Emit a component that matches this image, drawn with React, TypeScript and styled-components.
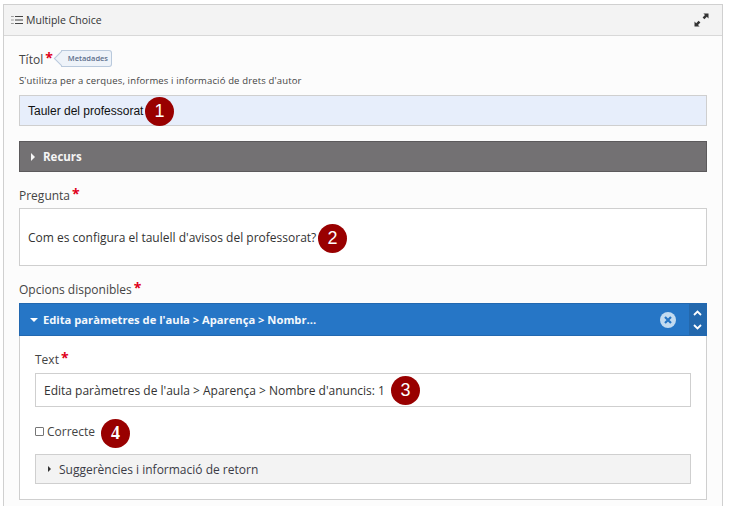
import React from "react";
import styled, { createGlobalStyle } from "styled-components";

const GlobalStyle = createGlobalStyle`
  html, body {
    margin: 0;
    height: 506px;
    overflow: hidden;
    background: #fff;
    font-family: "Open Sans", sans-serif;
  }
`;

const Editor = styled.div`
  box-sizing: border-box;
  width: 720px;
  height: 502px;
  margin: 4px 0 0 3px;
  background: #fcfcfc;
  border: 1px solid #d0d0d0;
  border-bottom: 0;
`;

const Header = styled.div`
  box-sizing: border-box;
  height: 31px;
  display: flex;
  align-items: center;
  justify-content: space-between;
  padding: 0 13px 0 7px;
  background: #f3f3f3;
  border-bottom: 1px solid #d8d8d8;
  font-size: 10.5px;
  font-weight: 400;
  color: #333;
`;

const HeaderTitle = styled.div`
  display: flex;
  align-items: center;
  gap: 3px;
`;

const Body = styled.div`
  padding: 14px 15px 0;
`;

const Label = styled.div`
  display: flex;
  align-items: flex-start;
  height: 19px;
  font-size: 12px;
  line-height: 19px;
  color: #444;
`;

const Star = styled.span`
  color: #e0001a;
  font-size: 14px;
  font-weight: 700;
  line-height: 15px;
  margin-left: 2px;
`;

const Tag = styled.span`
  position: relative;
  box-sizing: border-box;
  height: 17px;
  margin: 0 0 0 8px;
  padding: 0 3px 0 7px;
  font-size: 7.5px;
  font-weight: 600;
  line-height: 15px;
  color: #5d6f8c;
  background: #eef3f9;
  border: 1px solid #b9c9dc;
  border-left: 0;
  border-radius: 0 3px 3px 0;

  &::before {
    content: "";
    position: absolute;
    left: -5px;
    top: 2px;
    width: 10px;
    height: 10px;
    background: #eef3f9;
    border-left: 1px solid #b9c9dc;
    border-bottom: 1px solid #b9c9dc;
    transform: rotate(45deg);
  }
`;

const TagText = styled.span`
  position: relative;
`;

const Hint = styled.div`
  margin-top: 5px;
  height: 21px;
  font-size: 9.5px;
  line-height: 14px;
  letter-spacing: 0.15px;
  color: #444;
`;

const Field = styled.div<{ $height: number; $tinted?: boolean; $sans?: boolean }>`
  position: relative;
  box-sizing: border-box;
  display: flex;
  align-items: center;
  height: ${(p) => p.$height}px;
  padding: 0 8px;
  background: ${(p) => (p.$tinted ? "#e7eefb" : "#fff")};
  border: 1px solid #cfcfcf;
  font-family: ${(p) => (p.$sans ? '"Liberation Sans", Arial, sans-serif' : '"Open Sans", sans-serif')};
  font-size: 12px;
  color: ${(p) => (p.$sans ? "#111" : "#333")};
`;

const Badge = styled.span<{ $left: number; $top: number; $serif?: boolean }>`
  position: absolute;
  left: ${(p) => p.$left}px;
  top: ${(p) => p.$top}px;
  width: 29px;
  height: 29px;
  display: flex;
  align-items: center;
  justify-content: center;
  border-radius: 50%;
  background: #990000;
  color: #fff;
  font-family: ${(p) => (p.$serif ? '"Liberation Serif", serif' : '"Liberation Sans", Arial, sans-serif')};
  font-size: 18px;
  font-weight: ${(p) => (p.$serif ? 700 : 400)};
`;

const Recurs = styled.div`
  box-sizing: border-box;
  height: 31px;
  margin: 15px 0 14px;
  display: flex;
  align-items: center;
  gap: 8px;
  padding-left: 11px;
  background: #737173;
  border: 1px solid #5c5a5c;
  color: #f5f5f5;
  font-size: 11.5px;
  font-weight: 700;
`;

const Caret = styled.span<{ $color: string; $size: number }>`
  width: 0;
  height: 0;
  border-top: ${(p) => p.$size}px solid transparent;
  border-bottom: ${(p) => p.$size}px solid transparent;
  border-left: ${(p) => p.$size}px solid ${(p) => p.$color};
`;

const CaretDown = styled.span`
  width: 0;
  height: 0;
  border-left: 4.5px solid transparent;
  border-right: 4.5px solid transparent;
  border-top: 4px solid #fff;
`;

const QuestionLabel = styled(Label)`
  margin-bottom: 3px;
`;

const OptionsLabel = styled(Label)`
  margin-top: 14px;
  margin-bottom: 4px;
`;

const OptionBar = styled.div`
  box-sizing: border-box;
  height: 33px;
  display: flex;
  align-items: center;
  padding-left: 10px;
  background: #2676c6;
  border: 1px solid #2268b0;
  color: #f4f8fc;
  font-size: 11.2px;
  font-weight: 700;
`;

const OptionTitle = styled.span`
  flex: 1;
  margin-left: 5px;
`;

const Remove = styled.svg`
  margin-right: 13px;
`;

const Order = styled.div`
  width: 17px;
  align-self: stretch;
  display: flex;
  flex-direction: column;
  align-items: center;
  justify-content: center;
  gap: 8px;
  background: #2368ad;
`;

const OptionBody = styled.div`
  box-sizing: border-box;
  height: 164px;
  padding: 14px 15px 0;
  background: #fff;
  border: 1px solid #cfcfcf;
  border-top: 0;
`;

const TextLabel = styled(Label)`
  margin-bottom: 4px;
`;

const CheckRow = styled.div`
  position: relative;
  display: flex;
  align-items: center;
  gap: 3px;
  height: 20px;
  margin: 14px 0 13px;
  font-size: 12px;
  font-weight: 500;
  color: #444;
`;

const Box = styled.span`
  box-sizing: border-box;
  width: 9px;
  height: 9px;
  background: #fff;
  border: 1px solid #767676;
  border-radius: 1px;
`;

const Feedback = styled.div`
  box-sizing: border-box;
  height: 30px;
  display: flex;
  align-items: center;
  gap: 8px;
  padding-left: 12px;
  background: #f3f3f3;
  border: 1px solid #cfcfcf;
  font-size: 12px;
  color: #3b3b46;
`;

export default function App() {
  return (
    <>
      <GlobalStyle />
      <Editor>
        <Header>
          <HeaderTitle>
            <svg width="12" height="12" viewBox="0 0 12 12" fill="none" stroke="#444" strokeWidth="1">
              <path d="M4 2.5h8M4 6h8M4 9.5h8" />
              <path d="M0.5 2.5h2M0.5 6h2M0.5 9.5h2" strokeDasharray="1 .6" />
            </svg>
            Multiple Choice
          </HeaderTitle>
          <svg width="15" height="14" viewBox="0 0 15 14">
            <path d="M14.5 0.5v5l-1.7-1.7L10.4 6.2 8.6 4.4 11 2 9.4 0.5z" fill="#333" />
            <path d="M0.5 13.5v-5l1.7 1.7 2.4-2.4 1.8 1.8L4 12l1.6 1.5z" fill="#333" />
          </svg>
        </Header>
        <Body>
          <Label>
            Títol<Star>*</Star>
            <Tag>
              <TagText>Metadades</TagText>
            </Tag>
          </Label>
          <Hint>S'utilitza per a cerques, informes i informació de drets d'autor</Hint>
          <Field $height={31} $tinted $sans>
            Tauler del professorat
            <Badge $left={125} $top={1}>1</Badge>
          </Field>
          <Recurs>
            <Caret $color="#f5f5f5" $size={4} />
            Recurs
          </Recurs>
          <QuestionLabel>
            Pregunta<Star>*</Star>
          </QuestionLabel>
          <Field $height={58}>
            Com es configura el taulell d'avisos del professorat?
            <Badge $left={298} $top={15}>2</Badge>
          </Field>
          <OptionsLabel>
            Opcions disponibles<Star>*</Star>
          </OptionsLabel>
          <OptionBar>
            <CaretDown />
            <OptionTitle>Edita paràmetres de l'aula &gt; Aparença &gt; Nombr...</OptionTitle>
            <Remove width="16" height="16" viewBox="0 0 16 16">
              <circle cx="8" cy="8" r="8" fill="#c3dbf0" />
              <path d="M5 5l6 6M11 5l-6 6" stroke="#2676c6" strokeWidth="2.2" />
            </Remove>
            <Order>
              <svg width="9" height="6" viewBox="0 0 9 6" fill="none" stroke="#fff" strokeWidth="1.8">
                <path d="M1 5l3.5-3.5L8 5" />
              </svg>
              <svg width="9" height="6" viewBox="0 0 9 6" fill="none" stroke="#fff" strokeWidth="1.8">
                <path d="M1 1l3.5 3.5L8 1" />
              </svg>
            </Order>
          </OptionBar>
          <OptionBody>
            <TextLabel>
              Text<Star>*</Star>
            </TextLabel>
            <Field $height={34}>
              Edita paràmetres de l'aula &gt; Aparença &gt; Nombre d'anuncis: 1
              <Badge $left={355} $top={2}>3</Badge>
            </Field>
            <CheckRow>
              <Box />
              Correcte
              <Badge $left={66} $top={-2} $serif>4</Badge>
            </CheckRow>
            <Feedback>
              <Caret $color="#333" $size={3} />
              Suggerències i informació de retorn
            </Feedback>
          </OptionBody>
        </Body>
      </Editor>
    </>
  );
}
